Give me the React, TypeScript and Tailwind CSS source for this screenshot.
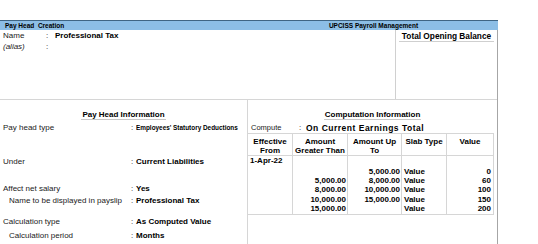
const rows = [
  ["1-Apr-22", "", "", "", ""],
  ["", "", "5,000.00", "Value", "0"],
  ["", "5,000.00", "8,000.00", "Value", "60"],
  ["", "8,000.00", "10,000.00", "Value", "100"],
  ["", "10,000.00", "15,000.00", "Value", "150"],
  ["", "15,000.00", "", "Value", "200"],
];

const cellAlign = ["text-left pl-[2px]", "text-right pr-[1px]", "text-right pr-[1px]", "text-left pl-[2px]", "text-right pr-[2px]"];

export default function App() {
  return (
    <div className="w-[538px] h-[244px] overflow-hidden bg-white pt-[20px] text-[8px] text-[#1a1a1a] [font-family:'Liberation_Sans',Arial,sans-serif]">
      <div className="w-[498px]">
        {/* title bar */}
        <div className="grid grid-cols-2 h-[10px] border-t border-[#3f6584] bg-[#8cbee6] text-[6.5px] font-bold leading-[9px] text-black">
          <div className="pl-[5px]">Pay Head&nbsp; Creation</div>
          <div className="text-center">UPCISS Payroll Management</div>
        </div>

        <div className="h-[215px] border-r border-[#a6a6a6]">
          {/* top part */}
          <div className="flex h-[70px] border-b border-[#d6d6d6]">
            <div className="flex-1 pl-[3px] leading-[11px]">
              <div className="flex">
                <span className="w-[43px] shrink-0">Name</span>
                <span className="w-[9px] shrink-0">:</span>
                <span className="font-bold text-black">Professional Tax</span>
              </div>
              <div className="flex">
                <span className="w-[43px] shrink-0 italic">(alias)</span>
                <span>:</span>
              </div>
            </div>
            <div className="w-[102px] border-l border-[#d0d0d0] px-[3px] pt-[2px]">
              <div className="border-b border-[#cfcfcf] text-center text-[8.3px] font-bold leading-[9px] text-black">Total Opening Balance</div>
            </div>
          </div>

          {/* lower part */}
          <div className="flex">
            <div className="w-[248px] h-[145px] shrink-0 border-r border-[#d6d6d6]">
              <div className="mt-[10px] text-center leading-[9px]">
                <span className="inline-block border-b border-[#c8c8c8] px-[1px] font-bold text-black">Pay Head Information</span>
              </div>
              <div className="pl-[3px] leading-[10px]">
                <div className="mt-[3px] flex whitespace-nowrap">
                  <span className="w-[128px] shrink-0">Pay head type</span>
                  <span className="w-[5px] shrink-0">:</span>
                  <span className="inline-block origin-left scale-x-[0.8] font-bold text-black">Employees' Statutory Deductions</span>
                </div>
                <div className="mt-[24px] flex">
                  <span className="w-[128px] shrink-0">Under</span>
                  <span className="w-[5px] shrink-0">:</span>
                  <span className="font-bold text-black">Current Liabilities</span>
                </div>
                <div className="mt-[17px] flex">
                  <span className="w-[128px] shrink-0">Affect net salary</span>
                  <span className="w-[5px] shrink-0">:</span>
                  <span className="font-bold text-black">Yes</span>
                </div>
                <div className="mt-[2px] flex">
                  <span className="w-[128px] shrink-0 pl-[6px]">Name to be displayed in payslip</span>
                  <span className="w-[5px] shrink-0">:</span>
                  <span className="font-bold text-black">Professional Tax</span>
                </div>
                <div className="mt-[11px] flex">
                  <span className="w-[128px] shrink-0">Calculation type</span>
                  <span className="w-[5px] shrink-0">:</span>
                  <span className="font-bold text-black">As Computed Value</span>
                </div>
                <div className="mt-[4px] flex">
                  <span className="w-[128px] shrink-0 pl-[6px]">Calculation period</span>
                  <span className="w-[5px] shrink-0">:</span>
                  <span className="font-bold text-black">Months</span>
                </div>
              </div>
            </div>

            <div className="flex-1">
              <div className="mt-[10px] text-center leading-[9px]">
                <span className="inline-block border-b border-[#c8c8c8] px-[1px] font-bold text-black">Computation Information</span>
              </div>
              <div className="mt-[3px] flex pl-[3px] leading-[10px] whitespace-nowrap">
                <span className="w-[48px] shrink-0 text-[7.5px]">Compute</span>
                <span className="w-[7px] shrink-0">:</span>
                <span className="text-[8.5px] tracking-[0.5px] font-bold text-black">On Current Earnings Total</span>
              </div>
              <div className="grid w-[246px] grid-cols-[45px_55px_54px_45px_47px] border-y border-[#d6d6d6] font-bold leading-[9px] text-black">
                {[["Effective", "From"], ["Amount", "Greater Than"], ["Amount Up", "To"], ["Slab Type"], ["Value"]].map((h, i) => (
                  <div key={i} className="h-[22px] border-r border-b border-[#d6d6d6] pt-[3px] text-center">
                    {h.map((l, j) => (
                      <div key={j}>{l}</div>
                    ))}
                  </div>
                ))}
                {rows.map((r, ri) =>
                  r.map((c, ci) => (
                    <div
                      key={ri + "-" + ci}
                      className={`${ri === 0 ? "h-[10px]" : "h-[9.6px]"} ${ri === 1 ? "pt-[1px]" : ""} border-r border-[#d6d6d6] whitespace-nowrap ${cellAlign[ci]}`}
                    >
                      {c}
                    </div>
                  ))
                )}
              </div>
            </div>
          </div>
        </div>
      </div>
    </div>
  );
}
